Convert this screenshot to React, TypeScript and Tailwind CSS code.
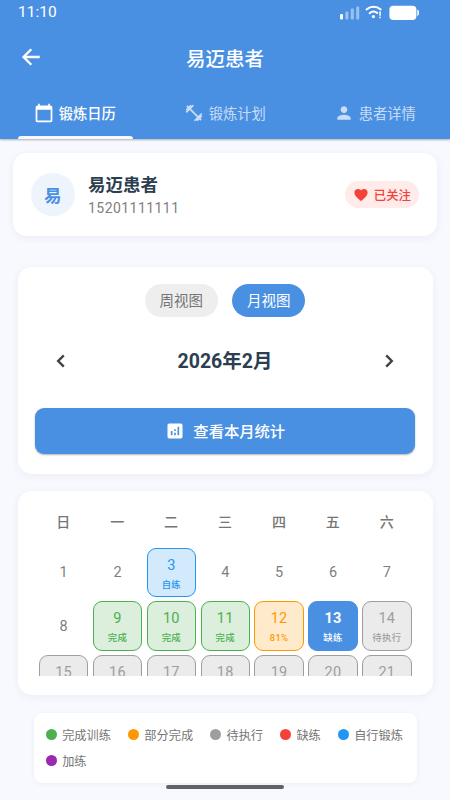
import {
  MdAnalytics,
  MdCalendarToday,
  MdFavorite,
  MdFitnessCenter,
  MdPerson,
} from 'react-icons/md'
import clsx from 'clsx'

type Status = 'done' | 'partial' | 'pending' | 'missed' | 'self'

interface Day {
  day: number
  status?: Status
  label?: string
}

const TABS = [
  { label: '锻炼日历', icon: MdCalendarToday },
  { label: '锻炼计划', icon: MdFitnessCenter },
  { label: '患者详情', icon: MdPerson },
]

const WEEKDAYS = ['日', '一', '二', '三', '四', '五', '六']

const DAYS: Day[] = [
  { day: 1 },
  { day: 2 },
  { day: 3, status: 'self', label: '自练' },
  { day: 4 },
  { day: 5 },
  { day: 6 },
  { day: 7 },
  { day: 8 },
  { day: 9, status: 'done', label: '完成' },
  { day: 10, status: 'done', label: '完成' },
  { day: 11, status: 'done', label: '完成' },
  { day: 12, status: 'partial', label: '81%' },
  { day: 13, status: 'missed', label: '缺练' },
  { day: 14, status: 'pending', label: '待执行' },
  { day: 15, status: 'pending' },
  { day: 16, status: 'pending' },
  { day: 17, status: 'pending' },
  { day: 18, status: 'pending' },
  { day: 19, status: 'pending' },
  { day: 20, status: 'pending' },
  { day: 21, status: 'pending' },
]

const STATUS_STYLES: Record<Status, string> = {
  done: 'border-[#4caf50] bg-[#dbefdc] text-[#4caf50]',
  partial: 'border-[#ff9800] bg-[#ffeacc] text-[#ff9800]',
  pending: 'border-[#9e9e9e] bg-[#ebebeb] text-[#9e9e9e]',
  missed: 'border-[#4a90e2] bg-[#4a90e2] text-white font-bold',
  self: 'border-[#2196f3] bg-[#d3e9fc] text-[#2196f3]',
}

const LEGEND = [
  { label: '完成训练', color: 'bg-[#4caf50]' },
  { label: '部分完成', color: 'bg-[#ff9800]' },
  { label: '待执行', color: 'bg-[#9e9e9e]' },
  { label: '缺练', color: 'bg-[#f44336]' },
  { label: '自行锻炼', color: 'bg-[#2196f3]' },
  { label: '加练', color: 'bg-[#9c27b0]' },
]

function StatusBar() {
  return (
    <div className="flex h-[26px] items-center justify-between pl-[18px] pr-[30px]">
      <span className="text-[15.5px] leading-none">11:10</span>
      <svg width="80" height="16" viewBox="0 0 80 16" fill="white">
        <rect x="0" y="9" width="3" height="5.6" rx="1" />
        <rect x="5.4" y="6.4" width="3" height="8.2" rx="1" opacity=".45" />
        <rect x="10.8" y="3.6" width="3" height="11" rx="1" opacity=".45" />
        <rect x="16.2" y="1.4" width="3" height="13.2" rx="1" opacity=".45" />
        <g fill="none" stroke="white" strokeWidth="2" strokeLinecap="round">
          <path d="M26.5 4.4C30.6 .9 36.6 .9 40.7 4.4" />
          <path d="M29.6 8.2C31.8 6.2 35 6.2 37.2 7.9" />
        </g>
        <circle cx="33.4" cy="11.6" r="1.6" />
        <rect x="39.3" y="6.4" width="1.5" height="4.4" />
        <rect x="39.3" y="11.7" width="1.5" height="1.5" />
        <rect x="49.4" y=".7" width="27" height="14.3" rx="4" />
        <path d="M77.3 4.6c1.2.4 1.7 1.4 1.7 3.2s-.5 2.8-1.7 3.2z" />
      </svg>
    </div>
  )
}

function Chevron({ points }: { points: string }) {
  return (
    <svg className="size-[26px]" viewBox="0 0 26 26" fill="none" stroke="currentColor" strokeWidth="2.4">
      <polyline points={points} />
    </svg>
  )
}

function DayCell({ day, status, label }: Day) {
  if (!status) {
    return (
      <div className="flex h-[49.4px] items-center justify-center pt-[2px] text-[14.5px] text-[#7f7f7f]">
        {day}
      </div>
    )
  }
  return (
    <div
      className={clsx(
        'flex h-[49.4px] flex-col items-center rounded-[9px] border pt-[8px]',
        STATUS_STYLES[status]
      )}
    >
      <span className="text-[14.5px] leading-[17px] tracking-[0.2px]">{day}</span>
      {label && (
        <span className="mt-[4px] text-[9.4px] font-medium leading-[13px] tracking-[0.3px]">{label}</span>
      )}
    </div>
  )
}

export default function App() {
  return (
    <div className="flex h-[800px] w-[450px] flex-col overflow-hidden bg-[#f8f9ff] font-[Roboto,'Noto_Sans_CJK_SC',sans-serif]">
      <header className="flex h-[139px] shrink-0 flex-col bg-[#4a90e2] text-white shadow-[0_1px_2px_rgba(0,0,0,0.3)]">
        <StatusBar />
        <div className="grid h-[62px] grid-cols-[62px_1fr_62px] items-center">
          <svg
            className="ml-[18px] size-[26px]"
            viewBox="0 0 26 26"
            fill="none"
            stroke="currentColor"
            strokeWidth="2.3"
          >
            <path d="M13.3 5.2 5.5 13l7.8 7.8M5.5 13h16.2" />
          </svg>
          <h1 className="pt-[5px] text-center text-[19.5px] font-medium">易迈患者</h1>
        </div>
        <nav className="grid flex-1 grid-cols-3">
          {TABS.map(({ label, icon: Icon }, i) => (
            <div
              key={label}
              className={clsx('flex flex-col', i === 0 ? 'font-medium' : 'text-white/70')}
            >
              <div className="flex flex-1 items-center justify-center gap-[4.5px] pt-[2px]">
                <Icon className="size-5" />
                <span className="pt-[2px] text-[14.3px] leading-5">{label}</span>
              </div>
              <div className={clsx('mx-[17.5px] h-[3px] rounded-t-[3px]', i === 0 && 'bg-[#f8f9ff]')} />
            </div>
          ))}
        </nav>
      </header>

      {/* Patient card */}
      <section className="mx-[13px] mt-[14px] flex h-[83px] shrink-0 items-center rounded-[14px] bg-white pl-[18px] pr-[18px] shadow-[0_2px_9px_rgba(40,50,90,0.06)]">
        <div className="flex size-[43.5px] items-center justify-center rounded-full bg-[#edf4fc] pt-[3px] text-[17.5px] font-bold text-[#4a90e2]">
          易
        </div>
        <div className="ml-[13.5px] flex-1">
          <div className="pt-px text-[17.5px] font-bold leading-[24px] text-[#2c3e50]">易迈患者</div>
          <div className="mt-[2px] text-[14px] leading-[18px] tracking-[0.45px] text-[#808080]">
            15201111111
          </div>
        </div>
        <div className="flex h-[27px] items-center gap-[5px] rounded-full bg-[#feebea] px-[8px] text-[#f44336]">
          <MdFavorite className="size-4" />
          <span className="pt-[2px] text-[12.4px] font-medium leading-4">已关注</span>
        </div>
      </section>

      {/* Month picker */}
      <section className="mx-[17.5px] mt-[31px] flex h-[207px] shrink-0 flex-col rounded-[14px] bg-white px-[17.5px] pt-[17px] shadow-[0_2px_9px_rgba(40,50,90,0.06)]">
        <div className="flex justify-center gap-[14.5px]">
          <button className="h-[33px] w-[73px] rounded-full bg-[#eeeeee] pt-[3px] text-[14.5px] text-[#757575]">周视图</button>
          <button className="h-[33px] w-[73px] rounded-full bg-[#4a90e2] pt-[3px] text-[14.5px] text-white">月视图</button>
        </div>
        <div className="mt-[24px] flex h-10 items-center justify-between px-[13px] text-[#424242]">
          <Chevron points="15.8,7.4 10.2,13 15.8,18.6" />
          <span className="pt-[2px] text-[19.5px] font-bold text-[#2c3e50]">2026年2月</span>
          <Chevron points="10.2,7.4 15.8,13 10.2,18.6" />
        </div>
        <button className="mt-[27px] flex h-[45.5px] items-center justify-center gap-[8.5px] rounded-[9px] bg-[#4a90e2] text-white shadow-[0_1px_2px_rgba(0,0,0,0.3)]">
          <MdAnalytics className="size-5" />
          <span className="pt-[3px] text-[15.3px] font-medium">查看本月统计</span>
        </button>
      </section>

      {/* Calendar */}
      <section className="mx-[17.5px] mt-[17px] h-[204px] shrink-0 rounded-[14px] bg-white px-[18.9px] pt-[17px] shadow-[0_2px_9px_rgba(40,50,90,0.06)]">
        <div className="grid h-[28px] grid-cols-7 items-center pt-px text-center text-[14px] font-medium text-[#757575]">
          {WEEKDAYS.map(w => (
            <span key={w}>{w}</span>
          ))}
        </div>
        <div className="mt-[9px] h-[131px] overflow-hidden pt-[2.6px]">
          <div className="grid grid-cols-7 gap-x-[4.5px] gap-y-[4.4px] pl-[2.5px] pr-[2.1px]">
            {DAYS.map(d => (
              <DayCell key={d.day} {...d} />
            ))}
          </div>
        </div>
      </section>

      {/* Legend */}
      <section className="mx-[33.5px] mt-[18px] flex h-[69.5px] shrink-0 flex-wrap content-start gap-x-[17.4px] gap-y-[8px] rounded-[8px] bg-white pl-[12.7px] pt-[12.6px] shadow-[0_1px_5px_rgba(40,50,90,0.06)]">
        {LEGEND.map(({ label, color }) => (
          <div key={label} className="flex h-[18px] items-center gap-[5px]">
            <span className={clsx('size-[11px] rounded-full', color)} />
            <span className="pt-[2px] text-[12.2px] leading-[18px] text-[#757575]">{label}</span>
          </div>
        ))}
      </section>

      <div className="mx-auto mt-[2.5px] h-[4px] w-[118.5px] shrink-0 rounded-full bg-[#626367]" />
    </div>
  )
}
